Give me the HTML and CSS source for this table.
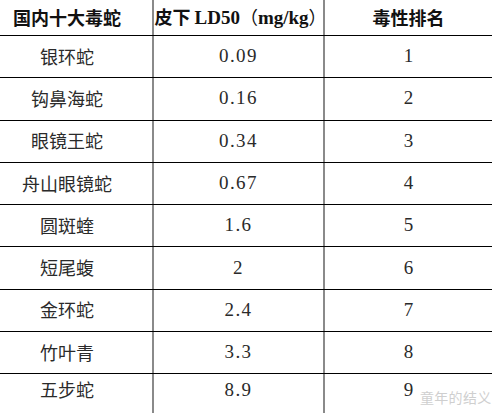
FILE: index.html
```html
<!DOCTYPE html>
<html lang="zh">
<head>
<meta charset="utf-8">
<link rel="stylesheet" href="styles.css">
</head>
<body>
<div class="page">
  <div class="table">
    <div class="row head">
      <div class="cell c1">国内十大毒蛇</div>
      <div class="cell c2"><span class="htext">皮下 <span class="lat">LD50</span><span class="paren">（</span><span class="lat">mg/kg</span><span class="paren">）</span></span></div>
      <div class="cell c3">毒性排名</div>
    </div>
    <div class="row"><div class="cell c1">银环蛇</div><div class="cell c2 num">0.09</div><div class="cell c3 rank">1</div></div>
    <div class="row"><div class="cell c1">钩鼻海蛇</div><div class="cell c2 num">0.16</div><div class="cell c3 rank">2</div></div>
    <div class="row"><div class="cell c1">眼镜王蛇</div><div class="cell c2 num">0.34</div><div class="cell c3 rank">3</div></div>
    <div class="row"><div class="cell c1">舟山眼镜蛇</div><div class="cell c2 num">0.67</div><div class="cell c3 rank">4</div></div>
    <div class="row"><div class="cell c1">圆斑蝰</div><div class="cell c2 num">1.6</div><div class="cell c3 rank">5</div></div>
    <div class="row"><div class="cell c1">短尾蝮</div><div class="cell c2 num">2</div><div class="cell c3 rank">6</div></div>
    <div class="row"><div class="cell c1">金环蛇</div><div class="cell c2 num">2.4</div><div class="cell c3 rank">7</div></div>
    <div class="row"><div class="cell c1">竹叶青</div><div class="cell c2 num">3.3</div><div class="cell c3 rank">8</div></div>
    <div class="row last"><div class="cell c1">五步蛇</div><div class="cell c2 num">8.9</div><div class="cell c3 rank">9</div></div>
  </div>
  <div class="watermark">童年的结义</div>
</div>
</body>
</html>
```

FILE: styles.css
```css
html, body {
  margin: 0;
  padding: 0;
  background: #fff;
}
.page {
  position: relative;
  width: 498px;
  height: 413px;
  overflow: hidden;
  font-family: "Noto Sans CJK SC", sans-serif;
  color: #2a2a2a;
}
.table {
  margin-left: -18px;
  width: 510px;
  display: flex;
  flex-direction: column;
}
.row {
  display: grid;
  grid-template-columns: 170px 171px 169px;
  height: 42.3px;
  box-sizing: border-box;
  border-bottom: 1px solid #000;
}
.row.head {
  height: 36px;
}
.row.last {
  border-bottom: none;
  height: 44px;
}
.cell {
  display: flex;
  align-items: center;
  justify-content: center;
  box-sizing: border-box;
  padding-bottom: 2px;
  font-size: 18px;
  line-height: 1;
  white-space: nowrap;
}
.last .cell {
  padding-bottom: 14px;
}
.c2, .c3 {
  border-left: 2px solid #8a8a8a;
}
.head .cell {
  font-weight: 700;
  color: #111;
}
.htext {
  white-space: pre;
  padding-left: 4px;
}
.head .lat {
  font-family: "Liberation Serif", serif;
  font-weight: 700;
  font-size: 19px;
}
.head .paren {
  font-weight: 400;
}
.num {
  font-family: "Liberation Serif", serif;
  font-size: 19px;
  letter-spacing: 1.4px;
  color: #2a2a2a;
}
.rank {
  font-family: "Liberation Serif", serif;
  font-size: 19px;
  color: #2a2a2a;
}
.watermark {
  position: absolute;
  left: 420px;
  top: 390px;
  font-size: 14px;
  line-height: 1;
  color: #cfcfcf;
  letter-spacing: 0.3px;
}
```
